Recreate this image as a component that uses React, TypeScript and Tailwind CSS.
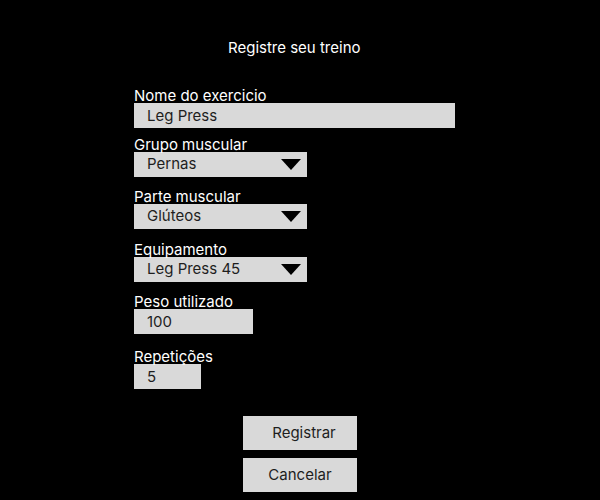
import React from "react";

function Caret() {
  return (
    <svg width="20" height="11" viewBox="0 0 20 11" className="block">
      <polygon points="0,0 20,0 10,11" fill="#000" />
    </svg>
  );
}

function Label({ children }: { children: React.ReactNode }) {
  return <div className="h-[17px] leading-[19px] text-[15px] text-white">{children}</div>;
}

function TextBox({ value, w }: { value: string; w: string }) {
  return (
    <div className={`${w} h-[25px] bg-[#d9d9d9] flex items-center pl-[13px] pt-[1px] text-[15px] text-[#1e1e1e]`}>
      {value}
    </div>
  );
}

function SelectBox({ value }: { value: string }) {
  return (
    <div className="w-[173px] h-[25px] bg-[#d9d9d9] flex items-center justify-between pl-[13px] pr-[6px] text-[15px] text-[#1e1e1e]">
      <span>{value}</span>
      <Caret />
    </div>
  );
}

export default function App() {
  return (
    <div className="w-[600px] h-[500px] bg-black font-['Inter',sans-serif] flex flex-col">
      <div className="mt-[39px] ml-[228px] h-[17px] leading-[17px] text-[15px] text-white">Registre seu treino</div>
      <div className="ml-[134px] mt-[30px] flex flex-col">
        <Label>Nome do exercicio</Label>
        <TextBox value="Leg Press" w="w-[321px]" />
        <div className="mt-[7px]">
          <Label>Grupo muscular</Label>
          <SelectBox value="Pernas" />
        </div>
        <div className="mt-[10px]">
          <Label>Parte muscular</Label>
          <SelectBox value="Glúteos" />
        </div>
        <div className="mt-[11px]">
          <Label>Equipamento</Label>
          <SelectBox value="Leg Press 45" />
        </div>
        <div className="mt-[10px]">
          <Label>Peso utilizado</Label>
          <TextBox value="100" w="w-[119px]" />
        </div>
        <div className="mt-[13px]">
          <Label>Repetições</Label>
          <TextBox value="5" w="w-[67px]" />
        </div>
      </div>
      <div className="mt-[27px] flex flex-col items-center gap-[8px]">
        <button className="w-[114px] h-[34px] bg-[#d9d9d9] text-[15px] text-[#1e1e1e] pl-[8px]">Registrar</button>
        <button className="w-[114px] h-[34px] bg-[#d9d9d9] text-[15px] text-[#1e1e1e]">Cancelar</button>
      </div>
    </div>
  );
}
